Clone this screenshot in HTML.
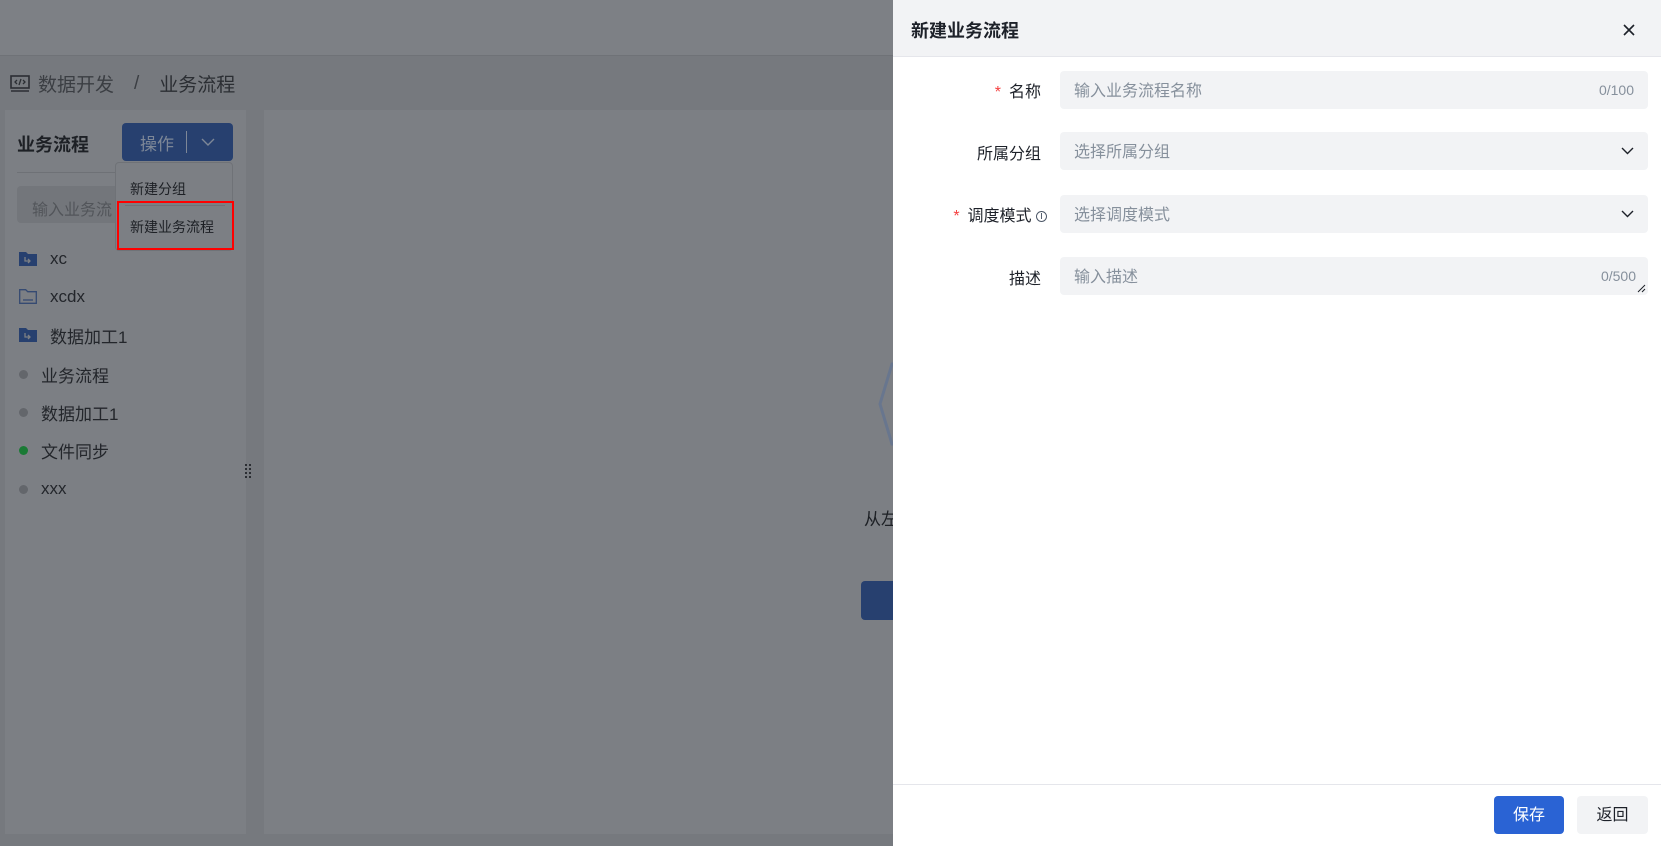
<!DOCTYPE html>
<html><head><meta charset="utf-8"><style>
*{box-sizing:border-box;margin:0;padding:0}
body{width:1661px;height:846px;overflow:hidden;position:relative;background:#76797e;font-family:"Liberation Sans","Noto Sans CJK SC",sans-serif;}
.abs{position:absolute}
.top{left:0;top:0;width:893px;height:56px;background:#7d8085;border-bottom:1px solid #6f7277}
.crumb{left:10px;top:70px;font-size:19px;color:#2b2e33;display:flex;align-items:center;gap:8px}
.panel{left:5px;top:110px;width:241px;height:724px;background:#7c7f84}
.main{left:264px;top:110px;width:640px;height:724px;background:#7c7f84}
.tree{font-size:17px;color:#23262b;display:flex;align-items:center}
.dot{width:9px;height:9px;border-radius:50%;background:#63666b;margin-right:10px}
.drawer{left:893px;top:0;width:768px;height:846px;background:#fff}
.hd{height:57px;background:#f2f3f5;border-bottom:1px solid #e5e6eb;position:relative}
.lbl{position:absolute;right:620px;font-size:16px;color:#1d2129;text-align:right;white-space:nowrap}
.inp{position:absolute;left:167px;width:588px;height:38px;background:#f2f3f5;border-radius:4px;font-size:16px;color:#86909c;padding-left:14px;line-height:42px}
.req{color:#f53f3f;margin-right:8px}
.cnt{position:absolute;right:14px;top:0;font-size:14px;color:#86909c;line-height:38px}
.chev{position:absolute;right:14px;top:15px}
</style></head><body>
<div class="abs top"></div>
<div class="abs crumb"><svg width="20" height="18" viewBox="0 0 20 18"><rect x="1" y="1" width="18" height="12" fill="none" stroke="#2b2e33" stroke-width="1.6"/><path d="M1 16h18" stroke="#2b2e33" stroke-width="1.6"/><path d="M7 5l-2 2 2 2M13 5l2 2-2 2M11 4l-2 6" stroke="#2b2e33" stroke-width="1.3" fill="none"/></svg><span style="color:#3b3e43">数据开发</span><span style="margin:0 12px;color:#3b3e43">/</span><span>业务流程</span></div>
<div class="abs panel"></div>
<div class="abs main"></div>
<div class="abs" style="left:17px;top:131px;font-size:18px;font-weight:bold;color:#1d2025">业务流程</div>
<div class="abs" style="left:17px;top:172px;width:216px;border-top:1px solid #6e7176"></div>
<div class="abs" style="left:122px;top:123px;width:111px;height:38px;background:#27406f;border-radius:4px;color:#7d8797;font-size:17px;display:flex;align-items:center"><span style="margin-left:18px">操作</span><span style="margin-left:12px;width:1px;height:22px;background:#7d8797"></span><svg style="margin-left:14px" width="14" height="8" viewBox="0 0 14 8"><path d="M1 1l6 6 6-6" stroke="#7d8797" fill="none" stroke-width="1.4"/></svg></div>
<div class="abs" style="left:17px;top:186px;width:110px;height:37px;background:#73767b;border-radius:4px;font-size:16px;color:#52555a;padding:10px 15px;white-space:nowrap;overflow:hidden">输入业务流</div>
<div class="abs" style="left:115px;top:162px;width:118px;height:89px;background:#7c7f84;border:1px solid #6f7277;border-radius:4px"></div>
<div class="abs" style="left:130px;top:179px;font-size:14px;color:#1d2025">新建分组</div>
<div class="abs" style="left:125px;top:205px;width:100px;border-top:1px solid #6f7277"></div>
<div class="abs" style="left:117px;top:201px;width:117px;height:49px;border:2px solid #ff0000"></div>
<div class="abs" style="left:130px;top:217px;font-size:14px;color:#1d2025">新建业务流程</div>
<svg class="abs" style="left:19px;top:251px" width="18" height="15" viewBox="0 0 18 15"><path d="M0 1h7l2 2h9v12H0z" fill="#27406f"/><path d="M6 6v4h5M9 8l2 2-2 2" stroke="#7c7f84" stroke-width="1.3" fill="none"/></svg>
<div class="abs tree" style="left:50px;top:249px">xc</div>
<svg class="abs" style="left:19px;top:289px" width="18" height="15" viewBox="0 0 18 15"><path d="M.7 .7h6l2 2h8.6v11.6H.7z" fill="none" stroke="#354a72" stroke-width="1.3"/><path d="M4 11h10" stroke="#354a72" stroke-width="1.3"/></svg>
<div class="abs tree" style="left:50px;top:287px">xcdx</div>
<svg class="abs" style="left:19px;top:327px" width="18" height="15" viewBox="0 0 18 15"><path d="M0 1h7l2 2h9v12H0z" fill="#27406f"/><path d="M6 6v4h5M9 8l2 2-2 2" stroke="#7c7f84" stroke-width="1.3" fill="none"/></svg>
<div class="abs tree" style="left:50px;top:323px">数据加工1</div>
<div class="abs tree" style="left:19px;top:362px"><span class="dot"></span><span style="margin-left:3px">业务流程</span></div>
<div class="abs tree" style="left:19px;top:400px"><span class="dot"></span><span style="margin-left:3px">数据加工1</span></div>
<div class="abs tree" style="left:19px;top:438px"><span class="dot" style="background:#1a7a35"></span><span style="margin-left:3px">文件同步</span></div>
<div class="abs tree" style="left:19px;top:479px"><span class="dot"></span><span style="margin-left:3px">xxx</span></div>
<svg class="abs" style="left:245px;top:464px" width="6" height="14" viewBox="0 0 6 14"><g fill="#2b2e33"><rect x="0" y="0" width="2" height="2"/><rect x="4" y="0" width="2" height="2"/><rect x="0" y="4" width="2" height="2"/><rect x="4" y="4" width="2" height="2"/><rect x="0" y="8" width="2" height="2"/><rect x="4" y="8" width="2" height="2"/><rect x="0" y="12" width="2" height="2"/><rect x="4" y="12" width="2" height="2"/></g></svg>
<svg class="abs" style="left:872px;top:362px" width="30" height="84" viewBox="0 0 30 84"><path d="M30 2L20 2 8 42 20 82 30 82" fill="none" stroke="#68768e" stroke-width="3"/></svg>
<div class="abs" style="left:864px;top:505px;font-size:17px;color:#1d2025">从左</div>
<div class="abs" style="left:861px;top:581px;width:40px;height:39px;background:#27406f;border-radius:4px"></div>
<div class="abs drawer">
 <div class="hd"><div style="position:absolute;left:18px;top:17px;font-size:18px;font-weight:bold;color:#1d2129">新建业务流程</div>
 <svg style="position:absolute;left:730px;top:24px" width="12" height="12" viewBox="0 0 12 12"><path d="M1 1l10 10M11 1L1 11" stroke="#1d2129" stroke-width="1.6"/></svg></div>
 <div class="lbl" style="top:78px"><span class="req">*</span>名称</div>
 <div class="inp" style="top:71px">输入业务流程名称<span class="cnt">0/100</span></div>
 <div class="lbl" style="top:140px">所属分组</div>
 <div class="inp" style="top:132px">选择所属分组<svg class="chev" width="13" height="8" viewBox="0 0 13 8"><path d="M1 1l5.5 5.5L12 1" stroke="#1d2129" fill="none" stroke-width="1.4"/></svg></div>
 <div class="lbl" style="top:202px;right:614px"><span class="req">*</span>调度模式 <span style="font-size:11px;color:#4e5969;border:1px solid #4e5969;border-radius:50%;display:inline-block;width:11px;height:11px;line-height:9px;text-align:center;vertical-align:2px">i</span></div>
 <div class="inp" style="top:195px">选择调度模式<svg class="chev" width="13" height="8" viewBox="0 0 13 8"><path d="M1 1l5.5 5.5L12 1" stroke="#1d2129" fill="none" stroke-width="1.4"/></svg></div>
 <div class="lbl" style="top:265px">描述</div>
 <div class="inp" style="top:257px">输入描述<span class="cnt" style="right:12px">0/500</span><svg style="position:absolute;right:2px;bottom:2px" width="9" height="9" viewBox="0 0 9 9"><path d="M8 1L1 8M8 5L5 8" stroke="#1d2129" stroke-width="1"/></svg></div>
 <div style="position:absolute;left:0;top:784px;width:768px;border-top:1px solid #e5e6eb"></div>
 <div style="position:absolute;left:601px;top:796px;width:70px;height:38px;background:#2a63d4;border-radius:4px;color:#fff;font-size:16px;text-align:center;line-height:40px">保存</div>
 <div style="position:absolute;left:684px;top:796px;width:71px;height:38px;background:#f2f3f5;border-radius:4px;color:#1d2129;font-size:16px;text-align:center;line-height:40px">返回</div>
</div>
</body></html>
